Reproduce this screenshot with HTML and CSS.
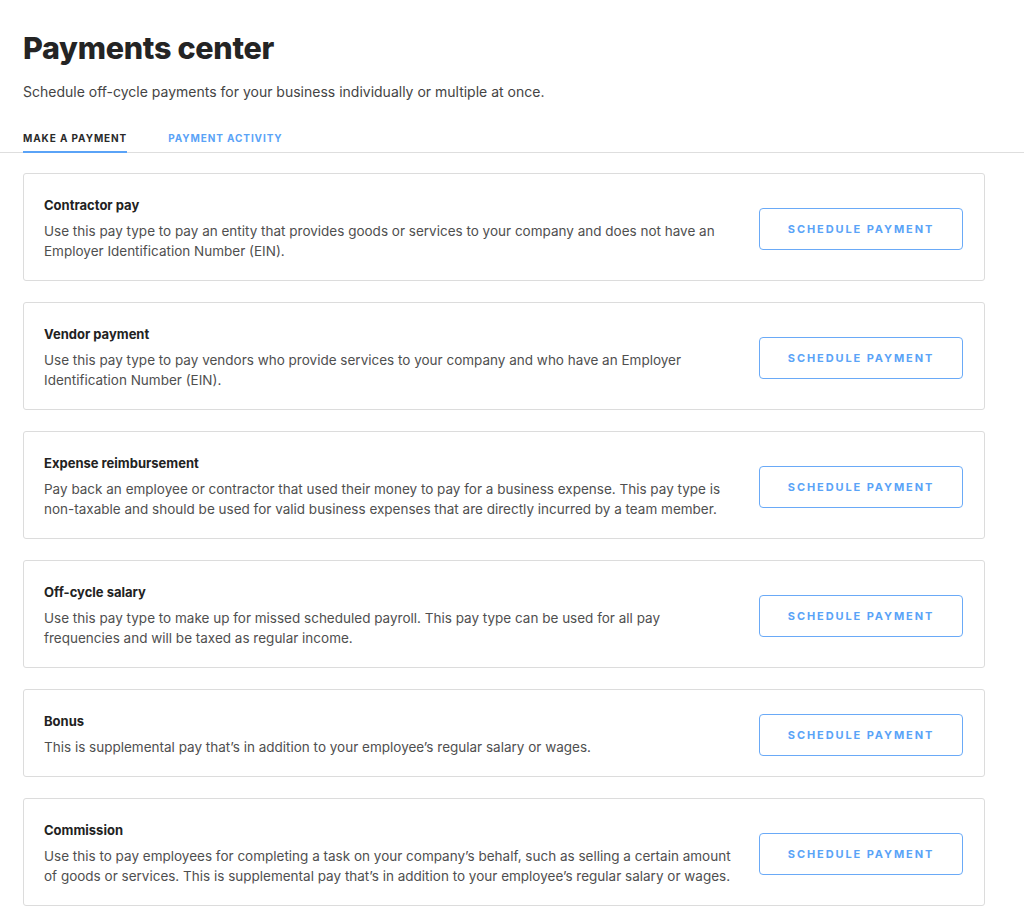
FILE: index.html
```html
<!DOCTYPE html>
<html lang="en">
  <head>
    <meta charset="UTF-8">
    <meta name="viewport" content="width=device-width, initial-scale=1.0">
    <title>Payments center</title>
    <link rel="stylesheet" href="styles.css">
  </head>
  <body>
  <header class="page-head">
    <h1>Payments center</h1>
    <p class="lead">Schedule off-cycle payments for your business individually or multiple at once.</p>
  </header>
  <nav class="tabs">
    <a class="tab active">MAKE A PAYMENT</a>
    <a class="tab">PAYMENT ACTIVITY</a>
  </nav>
  <main class="cards">
    <div class="card">
      <div class="card-text">
        <h3>Contractor pay</h3>
        <p>Use this pay type to pay an entity that provides goods or services to your company and does not have an Employer Identification Number (EIN).</p>
      </div>
      <button class="btn">SCHEDULE PAYMENT</button>
    </div>
    <div class="card">
      <div class="card-text">
        <h3>Vendor payment</h3>
        <p>Use this pay type to pay vendors who provide services to your company and who have an Employer Identification Number (EIN).</p>
      </div>
      <button class="btn">SCHEDULE PAYMENT</button>
    </div>
    <div class="card">
      <div class="card-text">
        <h3>Expense reimbursement</h3>
        <p>Pay back an employee or contractor that used their money to pay for a business expense. This pay type is non-taxable and should be used for valid business expenses that are directly incurred by a team member.</p>
      </div>
      <button class="btn">SCHEDULE PAYMENT</button>
    </div>
    <div class="card">
      <div class="card-text">
        <h3>Off-cycle salary</h3>
        <p>Use this pay type to make up for missed scheduled payroll. This pay type can be used for all pay frequencies and will be taxed as regular income.</p>
      </div>
      <button class="btn">SCHEDULE PAYMENT</button>
    </div>
    <div class="card">
      <div class="card-text">
        <h3>Bonus</h3>
        <p>This is supplemental pay that’s in addition to your employee’s regular salary or wages.</p>
      </div>
      <button class="btn">SCHEDULE PAYMENT</button>
    </div>
    <div class="card">
      <div class="card-text">
        <h3>Commission</h3>
        <p>Use this to pay employees for completing a task on your company’s behalf, such as selling a certain amount of goods or services. This is supplemental pay that’s in addition to your employee’s regular salary or wages.</p>
      </div>
      <button class="btn">SCHEDULE PAYMENT</button>
    </div>
  </main>
  </body>
</html>
```

FILE: styles.css
```css
html, body {
  margin: 0;
  background: #fff;
}
body {
  font-family: Inter, "Liberation Sans", sans-serif;
  color: #4a4a4a;
}
.page-head {
  padding: 28px 23px 0 23px;
}
.page-head h1 {
  margin: 0;
  font-size: 30.5px;
  font-weight: 800;
  color: #242424;
  letter-spacing: -0.3px;
  line-height: 40px;
}
.page-head .lead {
  margin: 14px 0 0 0;
  font-size: 14px;
  line-height: 20px;
  color: #444;
}
.tabs {
  display: flex;
  gap: 41px;
  margin-top: 30px;
  padding: 0 23px;
  border-bottom: 1px solid #dedede;
}
.tab {
  font-size: 10px;
  font-weight: 700;
  letter-spacing: 0.9px;
  padding-bottom: 7px;
  color: #5aa3f7;
  border-bottom: 2px solid transparent;
  margin-bottom: -1px;
}
.tab.active {
  color: #2a2a2a;
  border-bottom-color: #5aa3f7;
}
.cards {
  padding: 20px 39px 16px 23px;
  display: flex;
  flex-direction: column;
  gap: 21px;
}
.card {
  display: flex;
  align-items: center;
  justify-content: space-between;
  border: 1px solid #dcdcdc;
  border-radius: 3px;
  padding: 22px 21px 19px 20px;
}
.card-text {
  max-width: 690px;
}
.card h3 {
  margin: 0;
  font-size: 13px;
  line-height: 18px;
  font-weight: 700;
  color: #222;
}
.card p {
  margin: 7px 0 0 0;
  font-size: 13.5px;
  line-height: 20px;
  color: #4f4f4f;
}
.btn {
  width: 204px;
  height: 42px;
  flex-shrink: 0;
  background: #fff;
  border: 1.5px solid #6aaaf7;
  border-radius: 4px;
  color: #5aa3f7;
  font-family: Inter, "Liberation Sans", sans-serif;
  font-size: 11px;
  font-weight: 700;
  letter-spacing: 1.9px;
}
```
